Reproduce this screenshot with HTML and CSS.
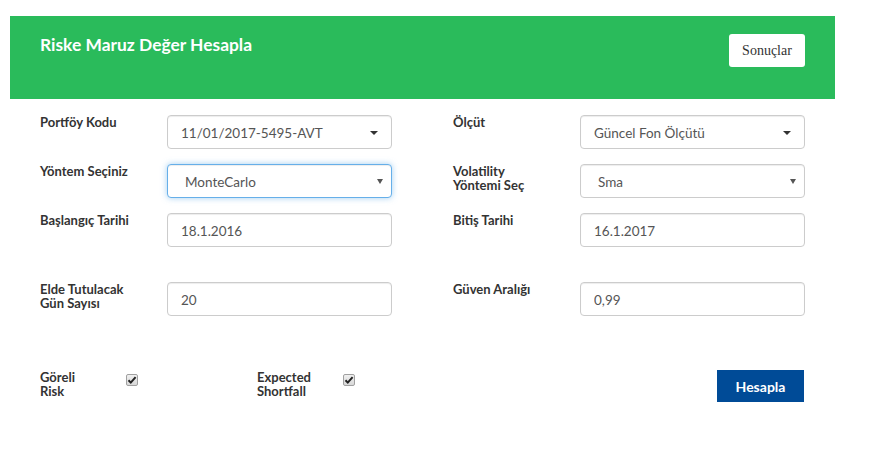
FILE: index.html
```html
<!DOCTYPE html>
<html lang="tr">
<head>
<meta charset="utf-8">
<title>Riske Maruz Değer Hesapla</title>
<link rel="stylesheet" href="styles.css">
</head>
<body>
<div class="panel">
  <div class="panel-head">
    <h1 class="title">Riske Maruz Değer Hesapla</h1>
    <button class="btn-results" type="button">Sonuçlar</button>
  </div>
  <div class="panel-body">
    <div class="grid">
      <div class="field">
        <label class="lbl">Portföy Kodu</label>
        <div class="select">
          <span class="select-text">11/01/2017-5495-AVT</span>
          <span class="caret"></span>
        </div>
      </div>
      <div class="field">
        <label class="lbl">Ölçüt</label>
        <div class="select">
          <span class="select-text">Güncel Fon Ölçütü</span>
          <span class="caret"></span>
        </div>
      </div>

      <div class="field">
        <label class="lbl">Yöntem Seçiniz</label>
        <div class="select native focus">
          <span class="select-text">MonteCarlo</span>
          <span class="arrow"></span>
        </div>
      </div>
      <div class="field">
        <label class="lbl"><span class="ln">Volatility</span><span class="ln">Yöntemi Seç</span></label>
        <div class="select native">
          <span class="select-text">Sma</span>
          <span class="arrow"></span>
        </div>
      </div>

      <div class="field">
        <label class="lbl">Başlangıç Tarihi</label>
        <input class="input" type="text" value="18.1.2016">
      </div>
      <div class="field">
        <label class="lbl">Bitiş Tarihi</label>
        <input class="input" type="text" value="16.1.2017">
      </div>

      <div class="field spaced">
        <label class="lbl"><span class="ln">Elde Tutulacak</span><span class="ln">Gün Sayısı</span></label>
        <input class="input" type="text" value="20">
      </div>
      <div class="field spaced">
        <label class="lbl">Güven Aralığı</label>
        <input class="input" type="text" value="0,99">
      </div>
    </div>

    <div class="actions">
      <div class="check-group">
        <span class="lbl check-lbl"><span class="ln">Göreli</span><span class="ln">Risk</span></span>
        <span class="checkbox"><svg width="10" height="10" viewBox="0 0 10 10"><path d="M1.5 5.2 L3.8 7.6 L8.6 2.2" fill="none" stroke="#222" stroke-width="2"/></svg></span>
      </div>
      <div class="check-group">
        <span class="lbl check-lbl"><span class="ln">Expected</span><span class="ln">Shortfall</span></span>
        <span class="checkbox"><svg width="10" height="10" viewBox="0 0 10 10"><path d="M1.5 5.2 L3.8 7.6 L8.6 2.2" fill="none" stroke="#222" stroke-width="2"/></svg></span>
      </div>
      <button class="btn-calc" type="button">Hesapla</button>
    </div>
  </div>
</div>
</body>
</html>
```

FILE: styles.css
```css
* { box-sizing: border-box; }

body {
  margin: 0;
  background: #fff;
  font-family: Lato, "Open Sans", sans-serif;
  color: #333;
}

.panel {
  margin: 16px 0 0 10px;
  width: 825px;
}

.panel-head {
  background: #2abb5b;
  height: 83px;
  padding: 18px 30px 0 30px;
  display: flex;
  justify-content: space-between;
  align-items: flex-start;
}

.title {
  margin: 0;
  font-size: 17.4px;
  line-height: 22px;
  font-weight: 700;
  color: #fff;
}

.btn-results {
  width: 76px;
  height: 33px;
  background: #fff;
  border: none;
  border-radius: 3px;
  font-family: "Liberation Serif", serif;
  font-size: 14px;
  color: #333;
  padding: 0;
}

.panel-body {
  padding: 16px 30px 0 30px;
}

.grid {
  display: grid;
  grid-template-columns: 352px 352px;
  column-gap: 61px;
  row-gap: 15px;
}

.field {
  display: flex;
  align-items: flex-start;
}

.field.spaced {
  margin-top: 20px;
}

.lbl {
  width: 127px;
  flex: none;
  font-size: 13px;
  line-height: 14px;
  font-weight: 700;
  color: #333;
}

.ln {
  display: block;
  height: 14px;
  overflow: visible;
}

.select,
.input {
  width: 225px;
  height: 34px;
  border: 1px solid #ccc;
  border-radius: 4px;
  background: #fff;
  box-shadow: inset 0 1px 1px rgba(0, 0, 0, 0.075);
  font-family: Lato, "Open Sans", sans-serif;
  font-size: 13.5px;
  color: #555;
}

.select {
  display: flex;
  align-items: center;
  justify-content: space-between;
  padding: 1px 13px 0 13px;
}

.select.native {
  padding: 1px 8px 0 17px;
}

.select.focus {
  border-color: #66afe9;
  box-shadow: inset 0 1px 1px rgba(0, 0, 0, 0.075), 0 0 6px rgba(102, 175, 233, 0.6);
}

.caret {
  width: 0;
  height: 0;
  border-top: 4px solid #333;
  border-left: 4px solid transparent;
  border-right: 4px solid transparent;
}

.arrow {
  width: 0;
  height: 0;
  border-top: 5px solid #555;
  border-left: 3px solid transparent;
  border-right: 3px solid transparent;
}

.input {
  display: block;
  padding: 1px 13px 0 13px;
  outline: none;
}

.actions {
  display: flex;
  align-items: flex-start;
  margin-top: 54px;
}

.check-group {
  width: 217px;
  display: flex;
  align-items: flex-start;
}

.check-lbl {
  width: 86px;
}

.checkbox {
  width: 12px;
  height: 12px;
  margin-top: 4px;
  border: 1px solid #a0a0a0;
  border-radius: 2px;
  background: linear-gradient(#f0f0f0, #d8d8d8);
  display: flex;
  align-items: center;
  justify-content: center;
}

.checkbox svg {
  display: block;
}

.btn-calc {
  margin-left: auto;
  margin-right: 1px;
  width: 87px;
  height: 32px;
  background: #004b97;
  border: none;
  border-radius: 0;
  color: #fff;
  font-family: Lato, "Open Sans", sans-serif;
  font-size: 14px;
  font-weight: 700;
  padding: 0;
}
```
